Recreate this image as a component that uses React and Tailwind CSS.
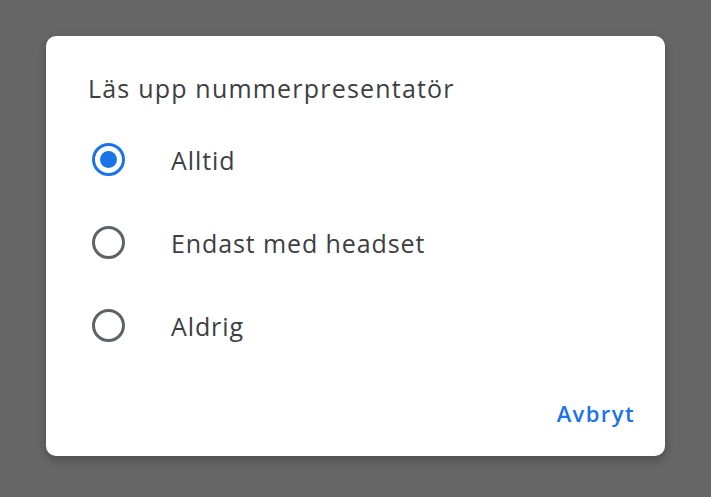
import { useState } from 'react';

const OPTIONS = ['Alltid', 'Endast med headset', 'Aldrig'];

function Radio({ checked }) {
  return (
    <span
      className={`flex h-[33px] w-[33px] shrink-0 items-center justify-center rounded-full border-[3.3px] ${
        checked ? 'border-[#1a73e8]' : 'border-[#5f6368]'
      }`}
    >
      {checked && <span className="h-[17px] w-[17px] rounded-full bg-[#1a73e8]" />}
    </span>
  );
}

export default function App() {
  const [value, setValue] = useState(0);

  return (
    <div className="h-[497px] w-[711px] bg-[#666666] pl-[46px] pt-[36px] font-['Open_Sans',sans-serif]">
      <div className="flex h-[420px] w-[619px] flex-col rounded-[10px] bg-white shadow-[0_4px_10px_rgba(0,0,0,0.25)]">
        <h2 className="pl-[42px] pt-[36px] text-[25px] leading-[32px] tracking-[1.2px] text-[#3c4043]">
          Läs upp nummerpresentatör
        </h2>
        <div className="mt-[14px] flex flex-col">
          {OPTIONS.map((label, i) => (
            <button
              key={label}
              onClick={() => setValue(i)}
              className="flex h-[83px] items-center gap-[46px] pl-[46px] text-left"
            >
              <Radio checked={value === i} />
              <span className="text-[25px] leading-[32px] tracking-[0.9px] text-[#3c4043]">{label}</span>
            </button>
          ))}
        </div>
        <div className="mt-auto flex justify-end pb-[29px] pr-[30px]">
          <button className="text-[22px] font-[550] leading-[28px] tracking-[1.4px] text-[#1a73e8]">
            Avbryt
          </button>
        </div>
      </div>
    </div>
  );
}
